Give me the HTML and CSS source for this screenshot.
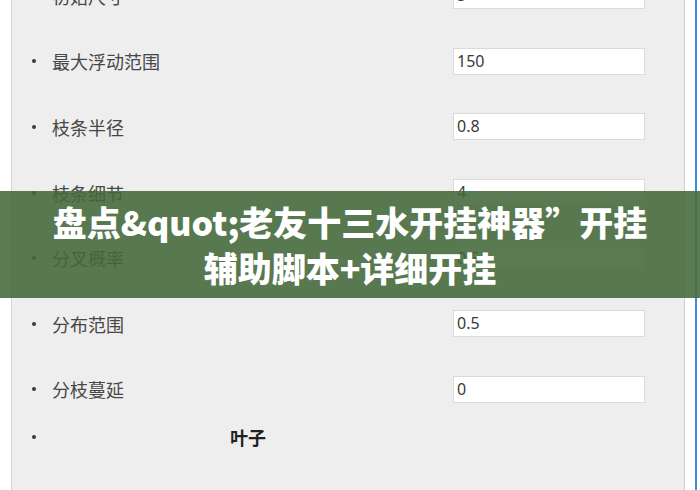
FILE: index.html
```html
<!DOCTYPE html>
<html lang="zh">
<head>
<meta charset="utf-8">
<link rel="stylesheet" href="styles.css">
</head>
<body>
<div class="page">
  <div class="gutter"></div>
  <div class="panel">
    <ul class="list">
      <li class="row"><span class="dot"></span><span class="label">初始尺寸</span><span class="field">5</span></li>
      <li class="row"><span class="dot"></span><span class="label">最大浮动范围</span><span class="field">150</span></li>
      <li class="row"><span class="dot"></span><span class="label">枝条半径</span><span class="field">0.8</span></li>
      <li class="row"><span class="dot"></span><span class="label">枝条细节</span><span class="field">4</span></li>
      <li class="row"><span class="dot"></span><span class="label">分叉概率</span><span class="field">0.5</span></li>
      <li class="row"><span class="dot"></span><span class="label">分布范围</span><span class="field">0.5</span></li>
      <li class="row"><span class="dot"></span><span class="label">分枝蔓延</span><span class="field">0</span></li>
      <li class="row head"><span class="dot"></span><span class="heading">叶子</span></li>
    </ul>
  </div>
  <div class="side"><div class="scroll"></div></div>
</div>
<div class="banner">
  <div class="title">盘点&amp;quot;老友十三水开挂神器”开挂<br>辅助脚本+详细开挂</div>
</div>
</body>
</html>
```

FILE: styles.css
```css
html, body {
  margin: 0;
  padding: 0;
  background: #ffffff;
  overflow: hidden;
}
.page {
  display: flex;
  width: 700px;
  height: 490px;
}
.gutter {
  width: 11px;
  background: #ffffff;
}
.panel {
  width: 672px;
  height: 490px;
  background: #eeeeee;
  border-left: 1px solid #d6d6d6;
  border-right: 1px solid #cfcfcf;
  overflow: hidden;
}
.side {
  flex: 1;
  display: flex;
  justify-content: flex-end;
  padding-right: 3px;
  background: #ffffff;
}
.scroll {
  width: 2px;
  background: #3a8ed8;
}
.list {
  list-style: none;
  margin: -37px 0 0 0;
  padding: 0;
}
.row {
  display: flex;
  align-items: center;
  height: 65.6px;
  padding-left: 20px;
}
.dot {
  width: 4px;
  height: 4px;
  border-radius: 50%;
  background: #3a3a3a;
  flex: none;
}
.label {
  width: 401px;
  margin-left: 16px;
  font-family: "Noto Sans CJK SC", sans-serif;
  font-size: 18px;
  color: #474747;
  flex: none;
}
.field {
  box-sizing: border-box;
  width: 192px;
  height: 27px;
  background: #ffffff;
  border: 1px solid #dadada;
  padding-left: 3px;
  font-family: "Noto Sans", sans-serif;
  font-size: 16px;
  line-height: 25px;
  color: #3a3a3a;
}
.row.head {
  height: 48px;
  margin-top: -9px;
}
.heading {
  margin-left: 194px;
  font-family: "Noto Sans CJK SC", sans-serif;
  font-size: 18px;
  font-weight: 700;
  color: #222222;
}
.banner {
  position: absolute;
  left: 0;
  top: 191px;
  width: 700px;
  height: 107px;
  background: rgba(67, 105, 58, 0.88);
  display: flex;
  align-items: center;
  justify-content: center;
}
.title {
  font-family: "Noto Sans CJK SC", sans-serif;
  font-weight: 900;
  font-size: 34px;
  line-height: 46px;
  color: #ffffff;
  text-align: center;
}
```
